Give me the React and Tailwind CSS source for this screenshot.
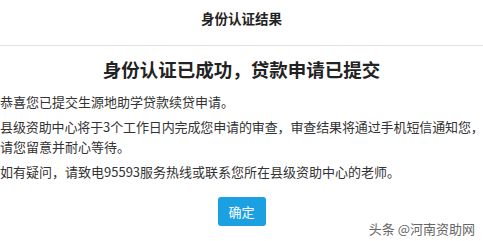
import React from 'react';

const font = { fontFamily: '"Noto Sans CJK SC", "Liberation Sans", sans-serif' };

export default function App() {
  return (
    <div className="w-[483px] h-[241px] bg-white overflow-hidden relative text-[#333]" style={font}>
      {/* header */}
      <div className="h-[46px] flex items-center justify-center border-b border-[#e2e2e2]">
        <span className="text-[13.5px] font-bold text-[#222] leading-none pb-[8px]">身份认证结果</span>
      </div>

      <h1 className="text-center text-[18.5px] font-bold text-[#222] leading-none mt-[14px]">
        身份认证已成功，贷款申请已提交
      </h1>

      <div className="mt-[13px] text-[13px] leading-[19.5px]">
        <p>恭喜您已提交生源地助学贷款续贷申请。</p>
        <p className="mt-[6px]">
          <span className="whitespace-nowrap tracking-[-0.12px]">
            县级资助中心将于3个工作日内完成您申请的审查，审查结果将通过手机短信通知您，
          </span>
          <br />
          请您留意并耐心等待。
        </p>
        <p className="mt-[6px]">如有疑问，请致电95593服务热线或联系您所在县级资助中心的老师。</p>
      </div>

      <div className="flex justify-center mt-[15px]">
        <button className="w-[48px] h-[29px] rounded-[3px] bg-[#1ba1e2] text-white text-[13px] leading-none">
          确定
        </button>
      </div>

      {/* watermark */}
      <div
        className="absolute right-[8px] bottom-[6px] text-[13px] text-[#666] leading-none"
        style={{ textShadow: '0 0 2px #fff, 0 0 1px #fff' }}
      >
        头条 @河南资助网
      </div>
    </div>
  );
}
